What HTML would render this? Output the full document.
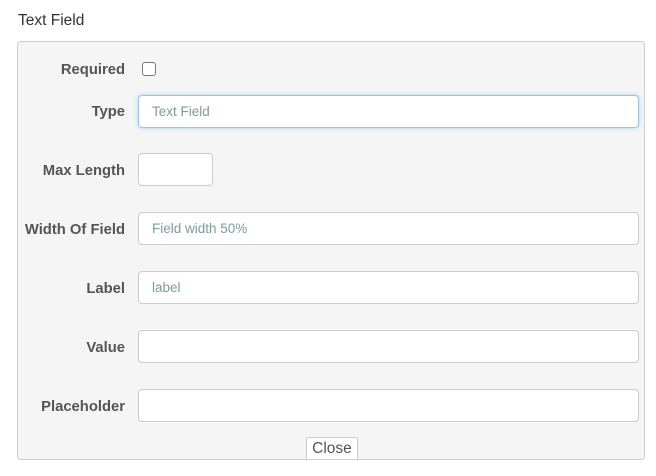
<!DOCTYPE html>
<html><head><style>
body{margin:0;width:656px;height:476px;background:#fff;font-family:"Liberation Sans",Arial,sans-serif;position:relative;overflow:hidden}
.t{position:absolute;left:18px;top:12px;font-size:15.5px;color:#333}
.p{position:absolute;left:17px;top:41px;width:626px;height:417px;background:#f5f5f5;border:1px solid #ccc;border-radius:4px}
.l{position:absolute;right:531px;font-size:14.8px;font-weight:bold;color:#555;text-align:right;white-space:nowrap}
.i{position:absolute;left:138px;width:499px;height:31px;background:#fff;border:1px solid #ccc;border-radius:4px;box-sizing:content-box;font-size:13.5px;color:#7f9a9a;line-height:31px;text-indent:13px}
.cb{position:absolute;left:142px;top:62px;width:12px;height:12px;border:1px solid #777;border-radius:3px;background:#fff}
.btn{position:absolute;left:306px;top:437px;width:50px;height:21px;background:#fff;border:1px solid #ccc;border-bottom:none;font-size:15.5px;color:#555;text-align:center;line-height:22px}
</style></head><body>
<div class="t">Text Field</div>
<div class="p"></div>
<div class="l" style="top:62px">Required</div><div class="cb"></div>
<div class="l" style="top:104px">Type</div><div class="i" style="top:95px;border-color:#9ec3e6;box-shadow:0 0 4px rgba(102,175,233,.5)">Text Field</div>
<div class="l" style="top:163px">Max Length</div><div class="i" style="top:153px;width:73px"></div>
<div class="l" style="top:222px">Width Of Field</div><div class="i" style="top:212px">Field width 50%</div>
<div class="l" style="top:281px">Label</div><div class="i" style="top:271px">label</div>
<div class="l" style="top:340px">Value</div><div class="i" style="top:330px"></div>
<div class="l" style="top:399px">Placeholder</div><div class="i" style="top:389px"></div>
<div class="btn">Close</div>
</body></html>
